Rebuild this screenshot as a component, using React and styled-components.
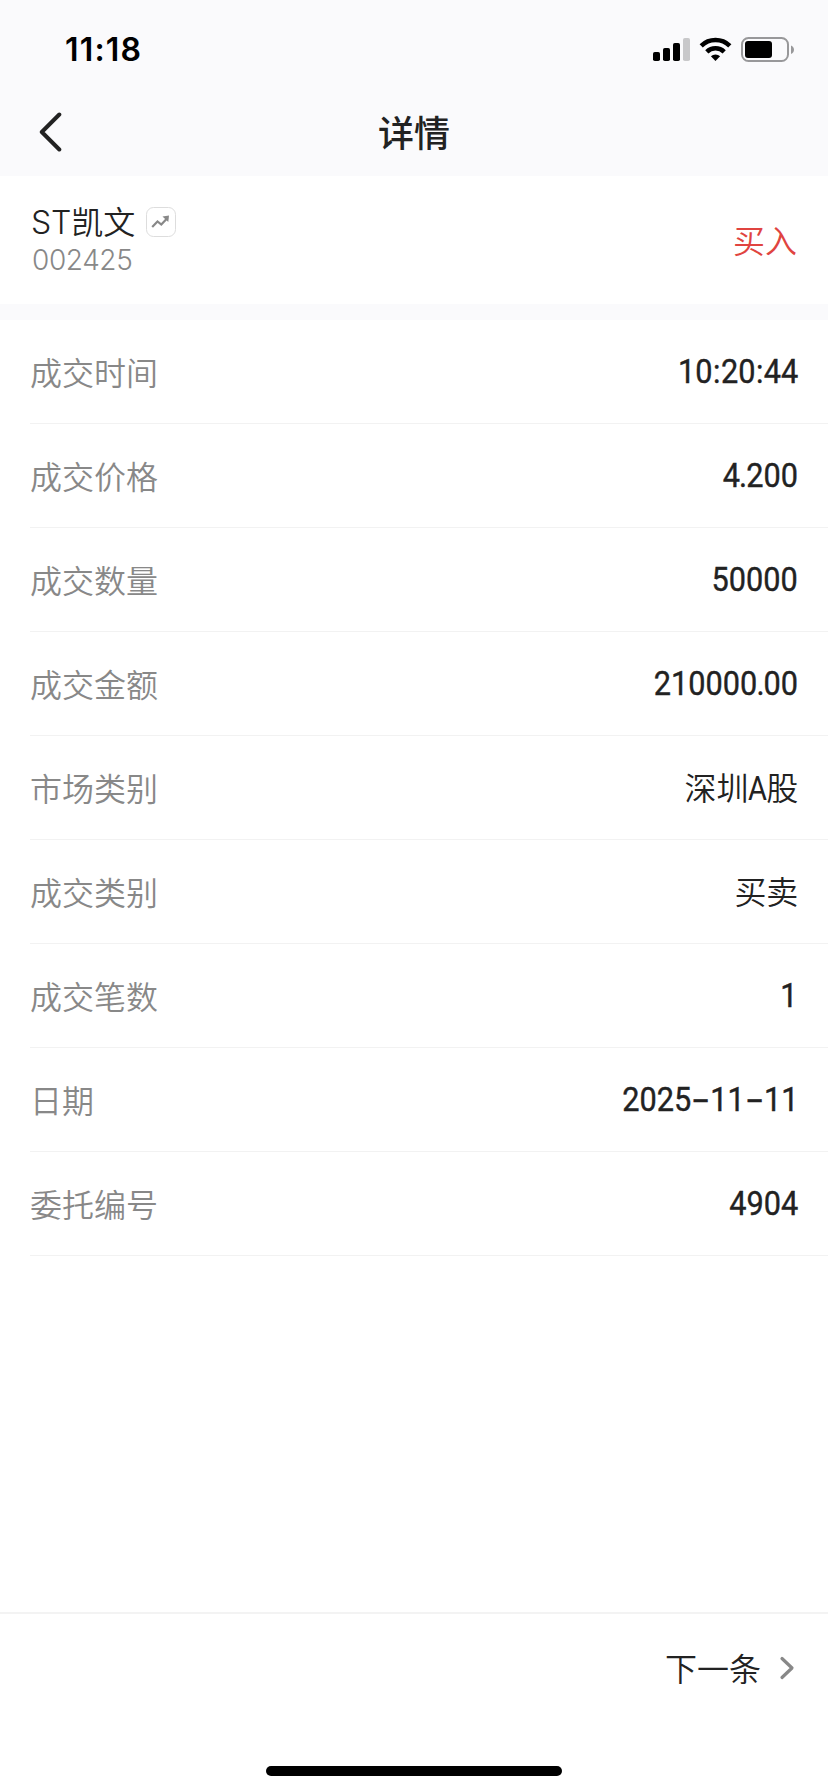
import React, { Component } from 'react'
import styled, { createGlobalStyle, css } from "styled-components";

const GlobalStyle = createGlobalStyle`
    * {
        box-sizing: border-box;
    }

    body {
        margin: 0;
        background: #fff;
        font-family: "Inter", "Noto Sans CJK SC", sans-serif;
        color: #222;
    }
`;

const Screen = styled.div`
    width: 828px;
    height: 1792px;
    display: flex;
    flex-direction: column;
    background: #fff;
    overflow: hidden;
`;

const StatusBar = styled.div`
    height: 88px;
    flex: none;
    display: flex;
    justify-content: space-between;
    padding: 30px 33px 0 65px;
    background: #fafafc;
`;

const Time = styled.div`
    font-size: 32px;
    line-height: 40px;
    font-weight: 600;
    letter-spacing: 1.2px;
    color: #000;
`;

const StatusIcons = styled.svg`
    width: 144px;
    height: 40px;
    display: block;
`;

const NavBar = styled.div`
    height: 88px;
    flex: none;
    display: grid;
    grid-template-columns: 100px 1fr 100px;
    align-items: center;
    background: #fafafc;
`;

const BackIcon = styled.svg`
    width: 24px;
    height: 42px;
    margin-left: 38px;
    display: block;
`;

const Title = styled.div`
    padding-bottom: 3px;
    text-align: center;
    font-family: "Noto Sans CJK SC", sans-serif;
    font-size: 36px;
    line-height: 44px;
    font-weight: 500;
`;

const Stock = styled.div`
    height: 144px;
    flex: none;
    display: flex;
    justify-content: space-between;
    padding: 26px 31px 0 32px;
    border-bottom: 16px solid #fafafc;
`;

const StockName = styled.div`
    display: flex;
    align-items: center;
    height: 40px;
    font-family: "Inter", "Noto Sans CJK SC", sans-serif;
    font-size: 32px;
    line-height: 38px;
    padding-top: 1px;
    font-weight: 350;
`;

const Latin = styled.span`
    margin-left: -1px;
    font-weight: 350;
    letter-spacing: -0.2px;
`;

const ChartIcon = styled.svg`
    width: 30px;
    height: 30px;
    margin: 0 0 1px 11px;
`;

const StockCode = styled.div`
    font-size: 28px;
    line-height: 36px;
    font-weight: 300;
    letter-spacing: -0.4px;
    color: #888;
`;

const Side = styled.div`
    padding-top: 17px;
    font-family: "Noto Sans CJK SC", sans-serif;
    font-size: 32px;
    line-height: 40px;
    font-weight: 350;
    color: #e04440;
`;

const List = styled.div`
    flex: 1;
    padding-left: 30px;
`;

const Row = styled.div`
    height: 104px;
    display: flex;
    align-items: center;
    justify-content: space-between;
    padding-right: 30px;
    border-bottom: 1px solid #f2f2f2;
`;

const Label = styled.div`
    padding-bottom: 1px;
    font-family: "Noto Sans CJK SC", sans-serif;
    font-size: 32px;
    line-height: 40px;
    font-weight: 350;
    color: #888;
`;

const Value = styled.div`
    padding-top: 2px;
    font-family: "Roboto", "Noto Sans CJK SC", sans-serif;
    font-size: 32px;
    line-height: 40px;
    font-weight: 350;
    letter-spacing: -0.2px;
    white-space: nowrap;

    ${props => props.$digits && css`
        padding-top: 0;
        font-size: 33px;
        font-weight: 450;
        letter-spacing: 0;
        -webkit-text-stroke: 0.4px #222;
        transform: scaleX(0.93);
        transform-origin: right center;
    `}
`;

const Dash = styled.span`
    display: inline-block;
    width: 20.5px;
    text-align: center;
    transform: scaleX(1.4);
    font-family: "Inter", sans-serif;
    font-weight: 400;
`;

const Dot = styled.span`
    margin: 0 -1px;
`;

const Colon = styled.span`
    margin: 0 0.5px;
`;

const Letter = styled.span`
    display: inline-block;
    width: 18px;
    font-size: 33px;
    font-weight: 450;
    transform: scaleX(0.88);
    transform-origin: left center;
`;

const Footer = styled.div`
    height: 180px;
    flex: none;
    display: flex;
    flex-direction: column;
    align-items: center;
    justify-content: space-between;
    padding-bottom: 16px;
    border-top: 2px solid #f3f3f3;
`;

const NextButton = styled.button`
    align-self: flex-end;
    display: flex;
    align-items: center;
    gap: 18px;
    margin: 0;
    padding: 33px 33px 0 0;
    border: none;
    background: none;
    font-family: "Noto Sans CJK SC", sans-serif;
    font-size: 32px;
    line-height: 40px;
    font-weight: 350;
    color: #222;
`;

const NextIcon = styled.svg`
    width: 16px;
    height: 26px;
    margin-top: 2px;
`;

const HomeIndicator = styled.div`
    width: 296px;
    height: 10px;
    border-radius: 5px;
    background: #000;
`;

const details = [
    { label: '成交时间', value: '10:20:44', digits: true },
    { label: '成交价格', value: '4.200', digits: true },
    { label: '成交数量', value: '50000', digits: true },
    { label: '成交金额', value: '210000.00', digits: true },
    { label: '市场类别', value: '深圳A股' },
    { label: '成交类别', value: '买卖' },
    { label: '成交笔数', value: '1', digits: true },
    { label: '日期', value: '2025-11-11', digits: true },
    { label: '委托编号', value: '4904', digits: true },
];

export class App extends Component {

    renderValue = (value) => {
        return value.split(/([-.:A])/).map((part, i) => {
            if (part === '-') return <Dash key={i}>-</Dash>
            if (part === '.') return <Dot key={i}>.</Dot>
            if (part === ':') return <Colon key={i}>:</Colon>
            if (part === 'A') return <Letter key={i}>A</Letter>
            return part
        });
    }

    render() {
        return (
            <Screen>
                <GlobalStyle />
                <StatusBar>
                    <Time>11:18</Time>
                    <StatusIcons viewBox="651 30 144 40">
                        <rect x="653" y="52" width="7" height="9" rx="1.8" />
                        <rect x="663" y="48" width="7" height="13" rx="1.8" />
                        <rect x="673" y="43" width="7" height="18" rx="1.8" />
                        <rect x="683" y="38" width="7" height="23" rx="1.8" fill="#c8c8ca" />
                        <g fill="none" stroke="#000" strokeWidth="4.6">
                            <path d="M701.2 45.8 A20.6 20.6 0 0 1 729.8 45.8" />
                            <path d="M706.8 51.8 A12.6 12.6 0 0 1 724.2 51.8" />
                        </g>
                        <path d="M715.5 61 L710.9 56.2 A6.8 6.8 0 0 1 720.1 56.2 Z" />
                        <rect x="742" y="38" width="46" height="23" rx="6.5" fill="none" stroke="#98989a" strokeWidth="2" />
                        <rect x="745" y="41" width="27" height="17" rx="3" />
                        <path d="M791 45.5 C795 47 795 52.500 791 54 Z" fill="#98989a" />
                    </StatusIcons>
                </StatusBar>
                <NavBar>
                    <BackIcon viewBox="0 0 24 42" fill="none" stroke="#222" strokeWidth="4" strokeLinecap="round" strokeLinejoin="round">
                        <path d="M21.300 3.500 L3.800 21 L21.300 38.500" />
                    </BackIcon>
                    <Title>详情</Title>
                </NavBar>
                <Stock>
                    <div>
                        <StockName>
                            <Latin>ST</Latin>凯文
                            <ChartIcon viewBox="0 0 30 30" fill="none">
                                <rect x="0.5" y="0.5" width="29" height="29" rx="7" stroke="#ddd" />
                                <path d="M6.200 20 L11.500 14.500 L15.300 17.500 L21 11.500" stroke="#888" strokeWidth="2.2" />
                                <path d="M16.500 9.500 L23 8.500 L22.300 15 Z" fill="#888" />
                            </ChartIcon>
                        </StockName>
                        <StockCode>002425</StockCode>
                    </div>
                    <Side>买入</Side>
                </Stock>
                <List>
                    {details.map(item => (
                        <Row key={item.label}>
                            <Label>{item.label}</Label>
                            <Value $digits={item.digits}>{this.renderValue(item.value)}</Value>
                        </Row>
                    ))}
                </List>
                <Footer>
                    <NextButton>
                        下一条
                        <NextIcon viewBox="0 0 16 26" fill="none" stroke="#888" strokeWidth="3.2" strokeLinecap="round" strokeLinejoin="round">
                            <path d="M3 3.500 L13 13 L3 22.500" />
                        </NextIcon>
                    </NextButton>
                    <HomeIndicator />
                </Footer>
            </Screen>
        )
    }
}
export default App
